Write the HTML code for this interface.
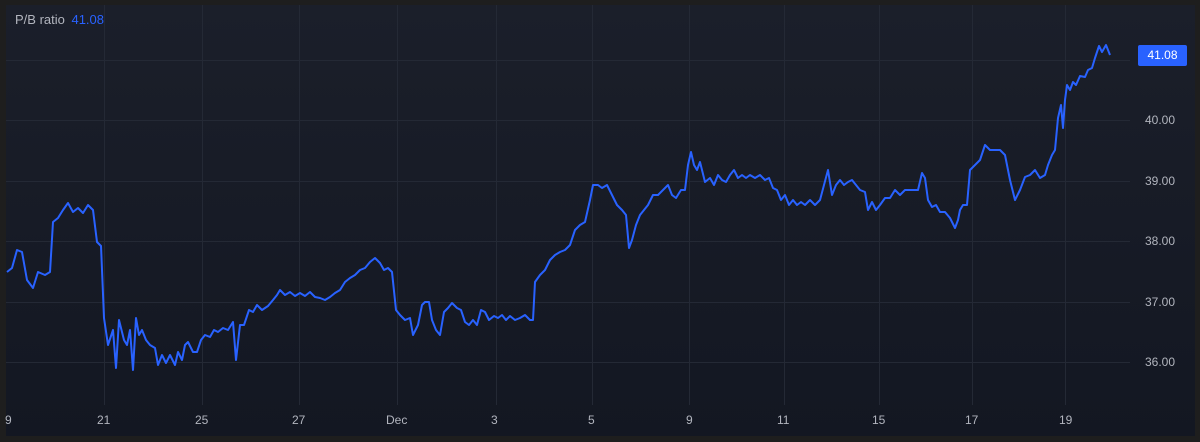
<!DOCTYPE html>
<html><head><meta charset="utf-8"><style>
html,body{margin:0;padding:0;background:#1e1e1e;}
body{width:1200px;height:442px;position:relative;overflow:hidden;font-family:"Liberation Sans",sans-serif;}
#c{position:absolute;left:6px;top:5px;width:1189px;height:431px;background:linear-gradient(#1b1f2a,#131722);}
.t{position:absolute;font-size:12px;color:#b2b5be;}
</style></head><body>
<div id="c"></div>
<svg width="1200" height="442" style="position:absolute;left:0;top:0">
<g stroke="#242935" stroke-width="1">
<line x1="104.5" y1="5" x2="104.5" y2="405"/><line x1="202.5" y1="5" x2="202.5" y2="405"/>
<line x1="299.5" y1="5" x2="299.5" y2="405"/><line x1="397.5" y1="5" x2="397.5" y2="405"/>
<line x1="496.5" y1="5" x2="496.5" y2="405"/><line x1="592.5" y1="5" x2="592.5" y2="405"/>
<line x1="689.5" y1="5" x2="689.5" y2="405"/><line x1="784.5" y1="5" x2="784.5" y2="405"/>
<line x1="879.5" y1="5" x2="879.5" y2="405"/><line x1="972.5" y1="5" x2="972.5" y2="405"/>
<line x1="1065.5" y1="5" x2="1065.5" y2="405"/>
<line x1="6" y1="60.5" x2="1130" y2="60.5"/><line x1="6" y1="120.5" x2="1130" y2="120.5"/>
<line x1="6" y1="181.5" x2="1130" y2="181.5"/><line x1="6" y1="241.5" x2="1130" y2="241.5"/>
<line x1="6" y1="302.5" x2="1130" y2="302.5"/><line x1="6" y1="362.5" x2="1130" y2="362.5"/>
</g>
<polyline fill="none" stroke="#2962ff" stroke-width="2" stroke-linejoin="round" points="7,272 12,268 17,250 22,252 27,280 33,288 38,272 45,275 50,272 53,222 58,218 63,210 68,203 73,212 78,208 83,213 88,205 93,210 97,242 101,246 104,318 108,345 113,330 116,368 119,320 124,340 127,345 130,330 133,370 136,318 139,335 142,330 146,340 150,345 155,348 158,365 162,355 166,363 170,355 175,365 178,352 182,360 185,345 188,342 193,352 197,352 201,340 205,335 210,337 214,330 218,332 223,328 228,330 233,322 236,360 240,325 244,325 249,310 253,312 257,305 262,310 268,306 273,300 277,295 280,290 285,295 290,292 295,296 300,293 305,296 310,292 315,297 320,298 325,300 330,297 335,293 340,290 345,282 350,278 355,275 360,270 365,268 370,262 375,258 380,263 384,270 388,268 392,272 396,310 400,315 405,320 410,318 413,335 418,325 422,305 425,302 429,302 432,320 436,330 440,335 444,312 448,308 452,303 457,308 461,310 465,322 469,325 473,320 477,325 481,310 485,312 489,320 494,316 498,318 502,315 506,320 510,316 515,320 520,318 525,315 530,320 533,320 535,282 540,275 545,270 550,260 555,255 560,252 565,250 570,245 575,230 580,225 585,222 590,200 593,185 598,185 602,188 607,185 612,195 617,205 622,210 626,215 629,248 632,240 636,225 640,215 644,210 648,205 653,195 658,195 663,190 668,185 672,195 676,198 681,190 685,190 688,165 691,152 694,165 697,170 700,162 705,182 710,178 714,185 718,175 722,180 726,182 730,175 734,170 738,178 742,175 746,178 750,175 755,178 760,175 765,180 769,178 773,188 777,190 781,200 785,195 789,205 793,200 797,205 801,202 805,205 810,200 815,205 820,200 824,185 828,170 832,195 836,185 840,180 844,185 848,182 852,180 856,185 860,190 865,192 868,210 872,202 876,210 880,205 885,198 890,198 895,190 900,195 905,190 910,190 914,190 918,190 922,173 925,178 928,200 932,207 936,205 940,212 945,212 950,218 955,228 958,220 960,210 963,205 967,205 970,170 975,165 980,160 985,145 990,150 995,150 1000,150 1005,155 1010,180 1015,200 1020,190 1025,177 1030,175 1035,170 1040,178 1045,175 1048,165 1052,155 1055,150 1058,118 1061,105 1063,128 1065,100 1067,85 1070,90 1073,82 1076,85 1080,76 1085,77 1088,70 1092,68 1095,58 1099,46 1102,52 1106,45 1110,55"/>
<rect x="1138" y="45" width="49" height="21" rx="2" fill="#2962ff"/>
</svg>
<div class="t" style="left:15px;top:12px;font-size:13px;">P/B ratio <span style="color:#2962ff;margin-left:3px">41.08</span></div>
<div class="t" style="left:1138px;top:48px;width:49px;text-align:center;color:#fff;">41.08</div>
<div class="t" style="left:1145px;top:113px">40.00</div>
<div class="t" style="left:1145px;top:174px">39.00</div>
<div class="t" style="left:1145px;top:234px">38.00</div>
<div class="t" style="left:1145px;top:295px">37.00</div>
<div class="t" style="left:1145px;top:355px">36.00</div>
<div class="t" style="left:5px;top:413px">9</div>
<div class="t" style="left:97px;top:413px">21</div>
<div class="t" style="left:195px;top:413px">25</div>
<div class="t" style="left:292px;top:413px">27</div>
<div class="t" style="left:386px;top:413px">Dec</div>
<div class="t" style="left:491px;top:413px">3</div>
<div class="t" style="left:588px;top:413px">5</div>
<div class="t" style="left:686px;top:413px">9</div>
<div class="t" style="left:777px;top:413px">11</div>
<div class="t" style="left:872px;top:413px">15</div>
<div class="t" style="left:965px;top:413px">17</div>
<div class="t" style="left:1059px;top:413px">19</div>
</body></html>
